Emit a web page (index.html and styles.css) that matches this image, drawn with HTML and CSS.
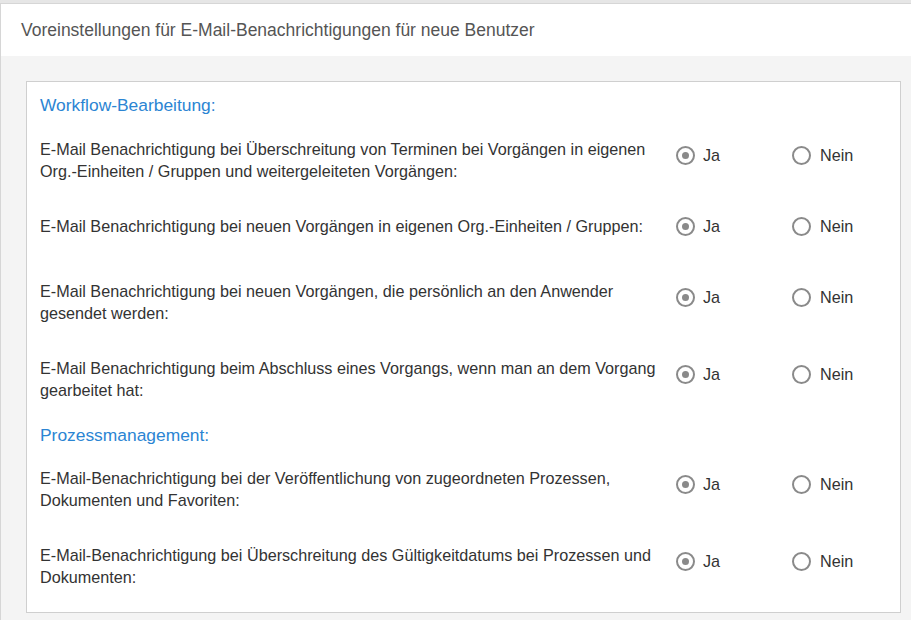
FILE: index.html
```html
<!DOCTYPE html>
<html lang="de">
<head>
<meta charset="utf-8">
<title>Voreinstellungen</title>
<link rel="stylesheet" href="styles.css">
</head>
<body>
<div class="topbar"></div>
<div class="panel">
  <div class="panel-header">Voreinstellungen für E-Mail-Benachrichtigungen für neue Benutzer</div>
  <div class="panel-body">
    <div class="box">
      <div class="section">
        <div class="section-title">Workflow-Bearbeitung:</div>
        <div class="row">
          <div class="row-text">E-Mail Benachrichtigung bei Überschreitung von Terminen bei Vorgängen in eigenen Org.-Einheiten / Gruppen und weitergeleiteten Vorgängen:</div>
          <label class="opt"><span class="radio checked"></span>Ja</label>
          <label class="opt"><span class="radio"></span>Nein</label>
        </div>
        <div class="row row--single">
          <div class="row-text">E-Mail Benachrichtigung bei neuen Vorgängen in eigenen Org.-Einheiten / Gruppen:</div>
          <label class="opt"><span class="radio checked"></span>Ja</label>
          <label class="opt"><span class="radio"></span>Nein</label>
        </div>
        <div class="row">
          <div class="row-text">E-Mail Benachrichtigung bei neuen Vorgängen, die persönlich an den Anwender gesendet werden:</div>
          <label class="opt"><span class="radio checked"></span>Ja</label>
          <label class="opt"><span class="radio"></span>Nein</label>
        </div>
        <div class="row">
          <div class="row-text">E-Mail Benachrichtigung beim Abschluss eines Vorgangs, wenn man an dem Vorgang gearbeitet hat:</div>
          <label class="opt"><span class="radio checked"></span>Ja</label>
          <label class="opt"><span class="radio"></span>Nein</label>
        </div>
      </div>
      <div class="section">
        <div class="section-title">Prozessmanagement:</div>
        <div class="row">
          <div class="row-text">E-Mail-Benachrichtigung bei der Veröffentlichung von zugeordneten Prozessen, Dokumenten und Favoriten:</div>
          <label class="opt"><span class="radio checked"></span>Ja</label>
          <label class="opt"><span class="radio"></span>Nein</label>
        </div>
        <div class="row">
          <div class="row-text">E-Mail-Benachrichtigung bei Überschreitung des Gültigkeitdatums bei Prozessen und Dokumenten:</div>
          <label class="opt"><span class="radio checked"></span>Ja</label>
          <label class="opt"><span class="radio"></span>Nein</label>
        </div>
      </div>
    </div>
  </div>
</div>
</body>
</html>
```
FILE: styles.css
```css
html, body {
  margin: 0;
  padding: 0;
  background: #f4f4f4;
  font-family: "Liberation Sans", Arial, sans-serif;
  color: #333;
  overflow: hidden;
}
.topbar {
  height: 3px;
  background: #e6e6e6;
}
.panel {
  border-top: 1px solid #d6d6d6;
  border-left: 1px solid #d6d6d6;
}
.panel-header {
  background: #fff;
  height: 52px;
  line-height: 52px;
  padding-left: 20px;
  font-size: 17.5px;
  color: #555;
}
.panel-body {
  background: #f4f4f4;
  padding: 25px 10px 30px 25px;
}
.box {
  background: #fff;
  border: 1px solid #cfcfcf;
  padding: 12px 13px 24px 13px;
}
.section + .section {
  margin-top: 23px;
}
.section-title {
  font-size: 17.4px;
  line-height: 22px;
  color: #2b85d3;
  margin-bottom: 22px;
}
.section + .section .section-title {
  margin-bottom: 21px;
}
.row {
  display: grid;
  grid-template-columns: 636px 116px auto;
  align-items: start;
  font-size: 16.2px;
  line-height: 22px;
  margin-bottom: 33px;
}
.row:last-child {
  margin-bottom: 0;
}
.row-text {
  padding-right: 12px;
}
.opt {
  display: flex;
  align-items: center;
  gap: 8px;
  margin-top: 6px;
}
.opt + .opt {
  gap: 9px;
}
.row--single {
  min-height: 32px;
}
.row--single .opt {
  margin-top: 0;
}
.radio {
  box-sizing: border-box;
  width: 19px;
  height: 19px;
  border: 2px solid #8a8a8a;
  border-radius: 50%;
  display: flex;
  align-items: center;
  justify-content: center;
  background: #fff;
}
.radio.checked::after {
  content: "";
  width: 7px;
  height: 7px;
  border-radius: 50%;
  background: #8a8a8a;
}
```
